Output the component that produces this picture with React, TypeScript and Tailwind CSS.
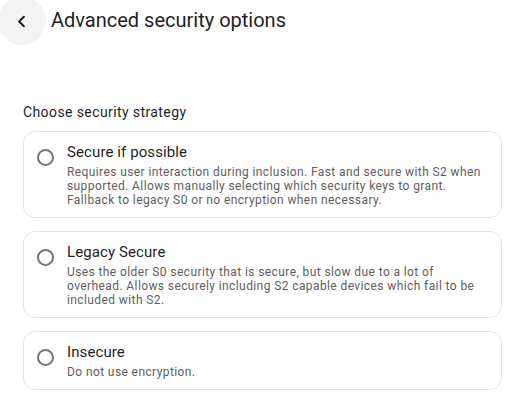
import { ChevronLeft } from "lucide-react"

const options = [
    {
        title: "Secure if possible",
        description:
            "Requires user interaction during inclusion. Fast and secure with S2 when supported. Allows manually selecting which security keys to grant. Fallback to legacy S0 or no encryption when necessary.",
    },
    {
        title: "Legacy Secure",
        description:
            "Uses the older S0 security that is secure, but slow due to a lot of overhead. Allows securely including S2 capable devices which fail to be included with S2.",
    },
    {
        title: "Insecure",
        description: "Do not use encryption.",
    },
]

export default function App() {
    return (
        <div className="min-h-screen bg-white font-['Roboto',sans-serif] text-[#1f1f1f] overflow-hidden">
            <header className="flex items-start h-[45px]">
                <button className="w-[48px] h-[48px] -ml-[2px] -mt-[3px] rounded-full bg-[#f3f3f3] flex items-center justify-center shrink-0">
                    <ChevronLeft size={19} strokeWidth={2.5} className="text-[#1f1f1f] -ml-[1px] mt-[1px]" />
                </button>
                <h1 className="ml-[5px] mt-[8px] text-[20px] leading-[24px]">Advanced security options</h1>
            </header>

            <main className="px-[23px] pt-[57px] w-[479px] box-content">
                <h2 className="text-[14px] leading-[20px] tracking-[0.4px] mb-[9px]">Choose security strategy</h2>

                <ul className="flex flex-col gap-[13px]">
                    {options.map((opt, index) => (
                        <li
                            key={index}
                            className="flex items-start border border-[#e3e3e3] rounded-[12px] pl-[13px] pr-[12px] pt-[10px] pb-[10px]"
                        >
                            <div className="mt-[7px] w-[17px] h-[17px] rounded-full border-2 border-[#767676] shrink-0"></div>
                            <div className="flex flex-col ml-[13px]">
                                <span className="text-[15px] leading-[20px] tracking-[0.1px]">{opt.title}</span>
                                <p className="mt-[3px] text-[12px] leading-[14px] tracking-[0.4px] text-[#5e5e5e]">
                                    {opt.description}
                                </p>
                            </div>
                        </li>
                    ))}
                </ul>
            </main>
        </div>
    )
}
